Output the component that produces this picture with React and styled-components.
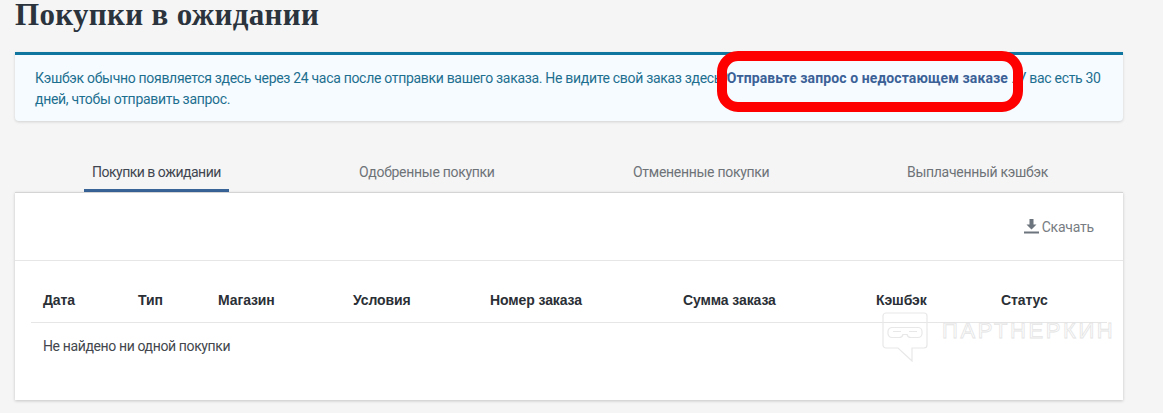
import React from "react";
import styled, { createGlobalStyle } from "styled-components";

const GlobalStyle = createGlobalStyle`
  html, body {
    margin: 0;
    padding: 0;
    background: #f5f5f5;
    font-family: "Roboto", "Liberation Sans", sans-serif;
    overflow: hidden;
  }
`;

const tabs = ["Покупки в ожидании", "Одобренные покупки", "Отмененные покупки", "Выплаченный кэшбэк"];
const columns = ["Дата", "Тип", "Магазин", "Условия", "Номер заказа", "Сумма заказа", "Кэшбэк", "Статус"];

const App = () => {
  return (
    <Page>
      <GlobalStyle />
      <Title>Покупки в ожидании</Title>
      <Notice>
        Кэшбэк обычно появляется здесь через 24 часа после отправки вашего заказа. Не видите свой заказ здесь?{" "}
        <NoticeLink>Отправьте запрос о недостающем заказе</NoticeLink> . У вас есть 30 дней, чтобы отправить запрос.
        <Highlight />
      </Notice>
      <Tabs>
        {tabs.map((tab, index) => (
          <Tab key={tab} $active={index === 0}>
            {tab}
          </Tab>
        ))}
      </Tabs>
      <Panel>
        <Toolbar>
          <Download>
            <svg width="15" height="15" viewBox="0 0 15 15" aria-hidden="true">
              <path d="M5.5 0h4v5.5h3L7.5 10.5 2.5 5.5h3z" fill="#6c757d" />
              <rect x="0" y="12.5" width="15" height="2" fill="#6c757d" />
            </svg>
            Скачать
          </Download>
        </Toolbar>
        <TableWrap>
          <HeadRow>
            {columns.map((col) => (
              <HeadCell key={col}>{col}</HeadCell>
            ))}
          </HeadRow>
          <Empty>Не найдено ни одной покупки</Empty>
        </TableWrap>
        <Watermark>
          <svg width="46" height="50" viewBox="0 0 46 50" fill="none" stroke="#e8e8e8" strokeWidth="1.2" aria-hidden="true">
            <path d="M4 1h38a3 3 0 0 1 3 3v29a3 3 0 0 1-3 3H30v13L16 36H4a3 3 0 0 1-3-3V4a3 3 0 0 1 3-3z" />
            <path d="M10 15.5h26a4 4 0 0 1 4 4v2a4 4 0 0 1-4 4h-7a4 4 0 0 1-4-3h-4a4 4 0 0 1-4 3h-7a4 4 0 0 1-4-4v-2a4 4 0 0 1 4-4z" />
            <path d="M11 19.5h8M27 19.5h8" />
          </svg>
          <WatermarkText>ПАРТНЕРКИН</WatermarkText>
        </Watermark>
      </Panel>
    </Page>
  );
};

const Page = styled.div`
  width: 1108px;
  height: 413px;
  padding-left: 15px;
`;

const Title = styled.h1`
  margin: 0;
  height: 52px;
  font-family: "Liberation Serif", serif;
  font-size: 31px;
  line-height: 30px;
  font-weight: 700;
  letter-spacing: 0.33px;
  color: #2b333d;
`;

const Notice = styled.div`
  position: relative;
  box-sizing: border-box;
  height: 69px;
  padding: 13px 20px 0;
  background: #f5fbff;
  border-top: 3px solid #0f76a0;
  border-radius: 0 0 4px 4px;
  box-shadow: 0 1px 3px rgba(0, 0, 0, 0.15);
  font-size: 14px;
  line-height: 21px;
  letter-spacing: -0.31px;
  color: #1d6f8f;
`;

const NoticeLink = styled.strong`
  margin-left: -4px;
  color: #3b6197;
  font-weight: 700;
  letter-spacing: 0.1px;
`;

const Highlight = styled.div`
  position: absolute;
  left: 702px;
  top: -4px;
  width: 306px;
  height: 61px;
  box-sizing: border-box;
  border: 10px solid #ff0000;
  border-radius: 21px;
`;

const Tabs = styled.div`
  display: flex;
  height: 71px;
  padding-left: 69px;
  align-items: flex-end;
`;

const Tab = styled.div`
  box-sizing: border-box;
  height: 42px;
  width: ${(p) => (p.$active ? "145px" : "152px")};
  margin-right: 122px;
  flex: none;
  padding: 1px 8px 0;
  font-size: 14px;
  line-height: 42px;
  white-space: nowrap;
  letter-spacing: ${(p) => (p.$active ? "-0.5px" : "-0.29px")};
  color: ${(p) => (p.$active ? "#3f4650" : "#6e7378")};
  border-bottom: 3px solid ${(p) => (p.$active ? "#386498" : "transparent")};
`;

const Panel = styled.div`
  position: relative;
  height: 208px;
  background: #fff;
  border-top: 1px solid #d4d4d4;
  box-sizing: border-box;
  box-shadow: 0 1px 3px rgba(0, 0, 0, 0.2);
`;

const Toolbar = styled.div`
  display: flex;
  justify-content: flex-end;
  align-items: center;
  height: 67px;
  padding-right: 29px;
  border-bottom: 1px solid #e6e6e6;
`;

const Download = styled.div`
  display: flex;
  align-items: center;
  gap: 3px;
  font-size: 14px;
  letter-spacing: -0.2px;
  color: #777c82;
`;

const TableWrap = styled.div`
  padding: 0 16px;
`;

const HeadRow = styled.div`
  display: grid;
  grid-template-columns: 95px 80px 135px 137px 193px 193px 125px 1fr;
  height: 61px;
  padding-left: 12px;
  align-items: end;
  border-bottom: 1px solid #e6e6e6;
`;

const HeadCell = styled.div`
  font-family: "Liberation Sans", sans-serif;
  padding-bottom: 14px;
  font-size: 14px;
  line-height: 16px;
  font-weight: 700;
  letter-spacing: -0.1px;
  color: #2b2f36;
`;

const Empty = styled.div`
  padding: 14px 12px;
  font-size: 14px;
  line-height: 18px;
  letter-spacing: -0.37px;
  color: #43474d;
`;

const Watermark = styled.div`
  position: absolute;
  left: 867px;
  top: 119px;
  display: flex;
  align-items: flex-start;
  gap: 14px;
  pointer-events: none;
`;

const WatermarkText = styled.span`
  margin-top: 7px;
  font-family: "Liberation Sans", sans-serif;
  font-size: 22px;
  line-height: 24px;
  font-weight: 400;
  letter-spacing: 2.6px;
  white-space: nowrap;
  color: #fff;
  -webkit-text-stroke: 0.8px #e4e4e4;
`;

export default App;
